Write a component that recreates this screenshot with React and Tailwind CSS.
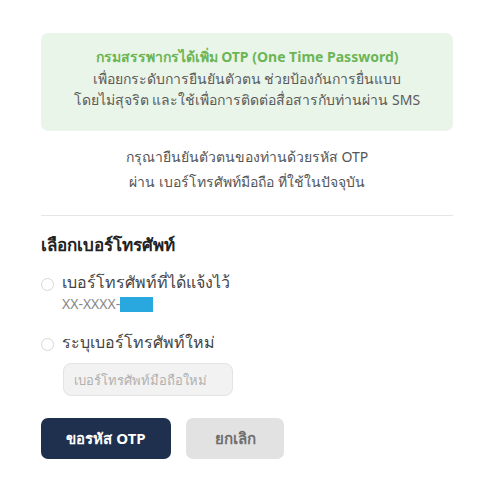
import React, { useState } from 'react'

const App = () => {
    const [choice, setChoice] = useState("");
    const [phone, setPhone] = useState("");

    return (
        <div className="w-[494px] h-[502px] bg-white px-[41px] pt-[33px] font-['Noto_Sans','Liberation_Sans',sans-serif]">
            <div className="rounded-[7px] bg-[#eaf5e9] pt-[13px] pb-[20px] text-center text-[14px] leading-[21.5px] text-[#5a5a5a]">
                <p className="font-bold text-[#6cb556]">กรมสรรพากรได้เพิ่ม OTP (One Time Password)</p>
                <p>เพื่อยกระดับการยืนยันตัวตน ช่วยป้องกันการยื่นแบบ</p>
                <p>โดยไม่สุจริต และใช้เพื่อการติดต่อสื่อสารกับท่านผ่าน SMS</p>
            </div>

            <div className="pt-[13px] pb-[21px] text-center text-[14px] leading-[25px] text-[#555]">
                <p>กรุณายืนยันตัวตนของท่านด้วยรหัส OTP</p>
                <p>ผ่าน เบอร์โทรศัพท์มือถือ ที่ใช้ในปัจจุบัน</p>
            </div>

            <div className="border-t border-[#e5e5e5]" />

            <h2 className="mt-[16px] text-[17px] font-bold text-[#222]">เลือกเบอร์โทรศัพท์</h2>

            <label className="mt-[14px] flex gap-[8px] cursor-pointer">
                <input
                    type="radio"
                    name="phone"
                    checked={choice === "old"}
                    onChange={() => setChoice("old")}
                    className="mt-[7px] h-[13px] w-[13px] shrink-0 appearance-none rounded-full border border-[#d6d6d6] bg-white checked:border-[4px] checked:border-[#1f2f4e]"
                />
                <div>
                    <p className="text-[16px] leading-[22px] text-[#444]">เบอร์โทรศัพท์ที่ได้แจ้งไว้</p>
                    <p className="flex items-center text-[14px] leading-[22px] text-[#888]">
                        XX-XXXX-<span className="inline-block h-[15px] w-[33px] bg-[#29a8e0]" />
                    </p>
                </div>
            </label>

            <label className="mt-[16px] flex gap-[8px] cursor-pointer">
                <input
                    type="radio"
                    name="phone"
                    checked={choice === "new"}
                    onChange={() => setChoice("new")}
                    className="mt-[7px] h-[13px] w-[13px] shrink-0 appearance-none rounded-full border border-[#d6d6d6] bg-white checked:border-[4px] checked:border-[#1f2f4e]"
                />
                <p className="text-[16px] leading-[22px] text-[#444]">ระบุเบอร์โทรศัพท์ใหม่</p>
            </label>

            <input
                type="text"
                value={phone}
                onChange={(e) => setPhone(e.target.value)}
                placeholder="เบอร์โทรศัพท์มือถือใหม่"
                disabled={choice !== "new"}
                className="mt-[10px] ml-[22px] block h-[33px] w-[170px] rounded-[8px] border border-[#e3e3e3] bg-[#f2f2f2] px-[10px] text-[13px] text-[#444] placeholder:text-[#b0b0b0] focus:outline-none"
            />

            <div className="mt-[22px] flex gap-[15px]">
                <button
                    type="button"
                    className="h-[41px] w-[130px] rounded-[7px] bg-[#1f2f4e] text-[15px] font-bold text-white"
                >
                    ขอรหัส OTP
                </button>
                <button
                    type="button"
                    className="h-[41px] w-[98px] rounded-[7px] bg-[#e2e2e2] text-[15px] font-bold text-[#6f6f6f]"
                >
                    ยกเลิก
                </button>
            </div>
        </div>
    )
}

export default App
